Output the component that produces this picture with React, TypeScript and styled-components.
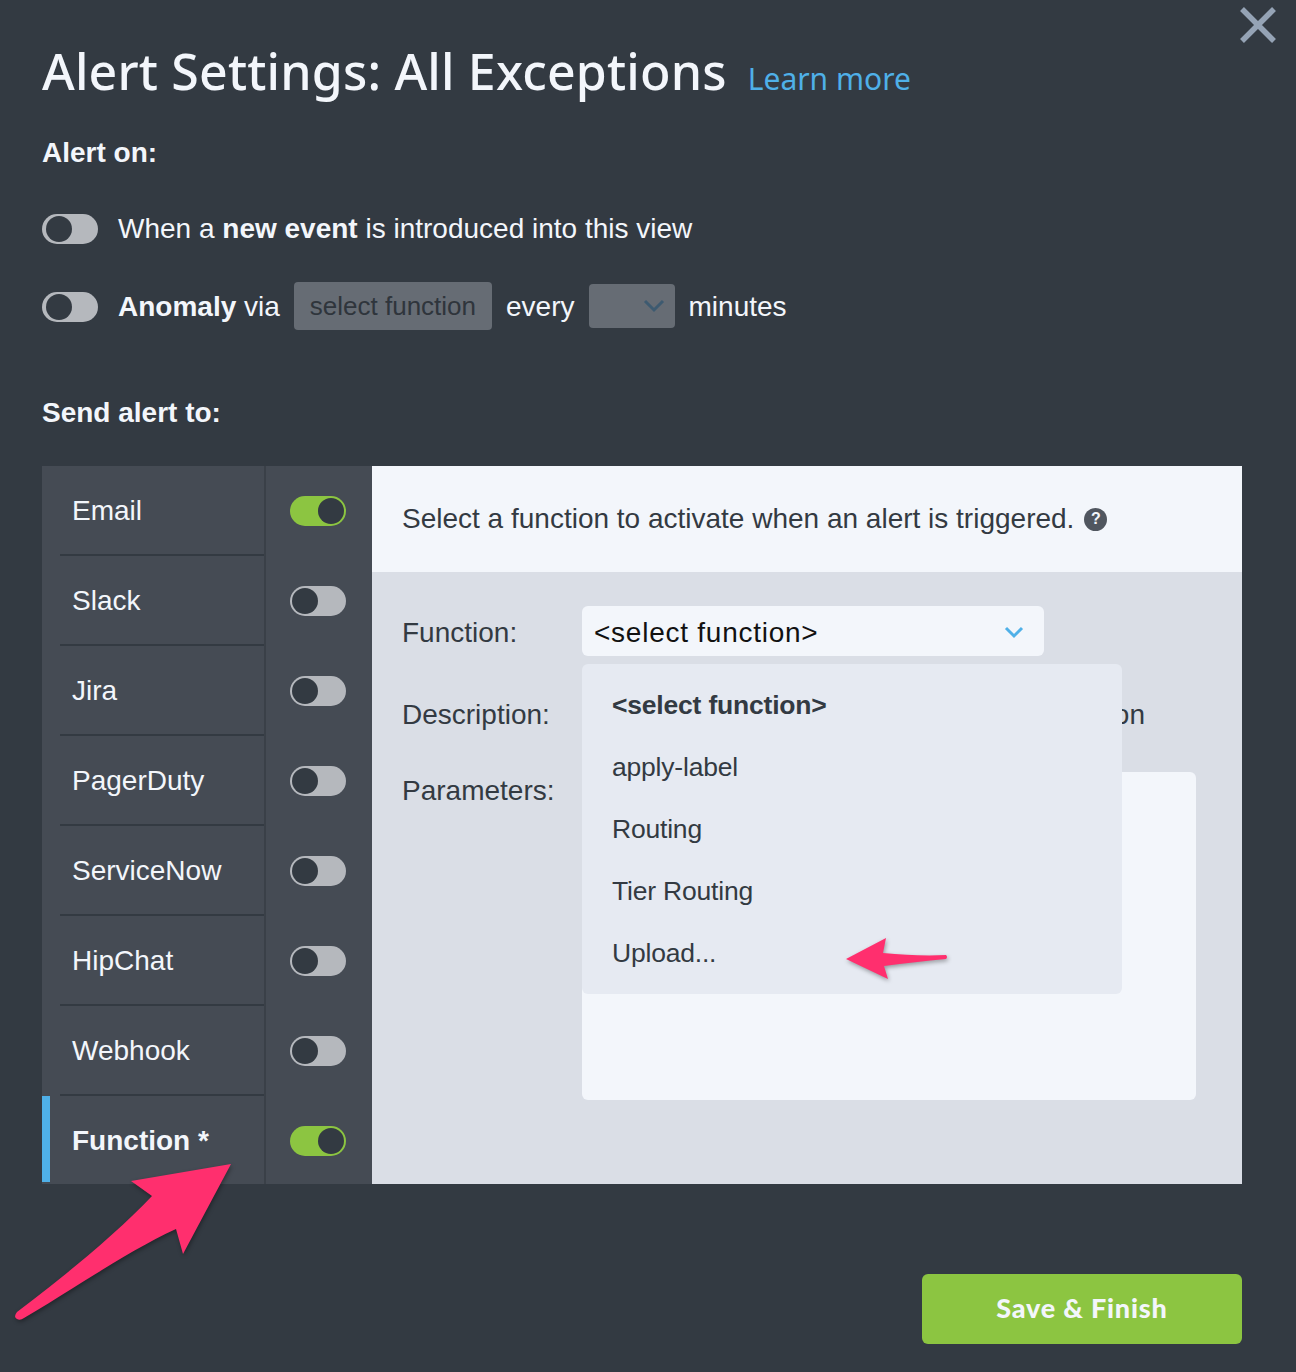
import React from "react";
import styled, { createGlobalStyle } from "styled-components";

const GlobalStyle = createGlobalStyle`
  html, body {
    margin: 0;
    padding: 0;
    background: #333a42;
  }
  * {
    box-sizing: border-box;
  }
`;

const Page = styled.div`
  position: relative;
  width: 1296px;
  height: 1372px;
  padding: 42px 54px 0 42px;
  overflow: hidden;
  background: #333a42;
  color: #f3f6fb;
  font-family: "Liberation Sans", Arial, sans-serif;
  font-size: 28px;
`;

const CloseIcon = styled.svg`
  position: absolute;
  top: 6px;
  right: 19px;
`;

const TitleRow = styled.div`
  display: flex;
  align-items: baseline;
  gap: 21px;
  height: 60px;
  line-height: 58px;
`;

const Title = styled.h1`
  margin: 0;
  font-family: "Noto Sans", sans-serif;
  font-size: 50px;
  font-weight: 500;
  letter-spacing: 0.18px;
  color: #f3f6fb;
`;

const LearnMore = styled.a`
  font-family: "Noto Sans", sans-serif;
  font-size: 30px;
  color: #4fb0e8;
`;

const SectionHeading = styled.div<{ $top: number }>`
  margin-top: ${(p) => p.$top}px;
  line-height: 32px;
  font-weight: 700;
`;

const OptionRow = styled.div<{ $top: number }>`
  display: flex;
  align-items: center;
  height: 48px;
  margin-top: ${(p) => p.$top}px;
`;

const Track = styled.span<{ $on?: boolean; $inset: number }>`
  display: flex;
  flex: none;
  align-items: center;
  justify-content: ${(p) => (p.$on ? "flex-end" : "flex-start")};
  width: 56px;
  height: 30px;
  padding: 0 2px 0 ${(p) => p.$inset}px;
  border-radius: 15px;
  background: ${(p) => (p.$on ? "#8cc541" : "#b5b8bd")};
`;

const Knob = styled.span`
  width: 26px;
  height: 26px;
  border-radius: 50%;
  background: #333a42;
`;

const Toggle = ({ on, inset = 2 }: { on?: boolean; inset?: number }) => (
  <Track $on={on} $inset={inset}>
    <Knob />
  </Track>
);

const OptionText = styled.span`
  margin-left: 20px;
`;

const FakeSelect = styled.span`
  display: flex;
  align-items: center;
  height: 48px;
  margin: 0 14px 2px;
  padding: 0 16px;
  border-radius: 4px;
  background: #666c74;
  color: #2f353c;
  font-size: 26px;
`;

const MinuteSelect = styled.span`
  display: flex;
  align-items: center;
  justify-content: flex-end;
  width: 86px;
  height: 44px;
  margin: 0 14px 2px;
  padding-right: 10px;
  border-radius: 4px;
  background: #666c74;
`;

const Table = styled.div`
  display: flex;
  width: 1200px;
  height: 718px;
  margin-top: 37px;
`;

const Sidebar = styled.div`
  display: flex;
  flex: none;
  flex-direction: column;
  width: 330px;
  background: #454b54;
`;

const Channel = styled.div`
  display: flex;
  flex: none;
  height: 90px;
  &:last-child {
    height: 88px;
  }
`;

const ChannelCell = styled.div<{ $active?: boolean }>`
  width: 224px;
  padding-left: 18px;
  border-right: 2px solid #3a4048;
  background: ${(p) =>
    p.$active
      ? "linear-gradient(#4fb0e8, #4fb0e8) left top / 8px 86px no-repeat"
      : "none"};
`;

const ChannelName = styled.div<{ $active?: boolean; $last?: boolean }>`
  height: 100%;
  padding: 28px 0 0 12px;
  border-bottom: 2px solid ${(p) => (p.$last ? "transparent" : "#333a42")};
  line-height: 34px;
  font-weight: ${(p) => (p.$active ? 700 : 400)};
`;

const ChannelSwitch = styled.div`
  display: flex;
  flex: 1;
  justify-content: center;
  padding-top: 30px;
  padding-right: 2px;
`;

const Panel = styled.div`
  position: relative;
  flex: 1;
  background: #dadee6;
  color: #333a42;
`;

const PanelHeader = styled.div`
  display: flex;
  align-items: center;
  gap: 10px;
  height: 106px;
  padding: 0 30px;
  background: #f3f6fb;
`;

const HelpBadge = styled.span`
  display: flex;
  align-items: center;
  justify-content: center;
  width: 23px;
  height: 23px;
  border-radius: 50%;
  background: #50565f;
  color: #f3f6fb;
  font-size: 16px;
  font-weight: 700;
`;

const Form = styled.div`
  display: grid;
  grid-template-columns: 180px 614px;
  grid-template-rows: 50px 32px 328px;
  row-gap: 42px;
  padding: 34px 0 0 30px;
`;

const FieldLabel = styled.div<{ $nudge: number }>`
  margin-top: ${(p) => p.$nudge}px;
  line-height: 32px;
`;

const FunctionSelect = styled.div`
  display: flex;
  align-items: center;
  justify-content: space-between;
  width: 462px;
  height: 50px;
  padding: 4px 19px 0 12px;
  border-radius: 6px;
  background: #f3f6fb;
  color: #111;
  letter-spacing: 0.75px;
`;

const Description = styled.div`
  width: 563px;
  margin-top: 1px;
  line-height: 32px;
  text-align: right;
`;

const Parameters = styled.div`
  border-radius: 6px;
  background: #f3f6fb;
`;

const Menu = styled.ul`
  position: absolute;
  top: 198px;
  left: 210px;
  width: 540px;
  margin: 0;
  padding: 10px 0;
  border-radius: 6px;
  background: #e6eaf2;
  list-style: none;
`;

const MenuItem = styled.li<{ $selected?: boolean }>`
  height: 62px;
  padding-left: 30px;
  line-height: 62px;
  font-size: 26.5px;
  letter-spacing: -0.2px;
  font-weight: ${(p) => (p.$selected ? 700 : 400)};
`;

const Footer = styled.div`
  display: flex;
  justify-content: flex-end;
  margin-top: 90px;
`;

const SaveButton = styled.button`
  width: 320px;
  height: 70px;
  padding: 0 0 4px;
  border: 0;
  border-radius: 6px;
  background: #8cc541;
  color: #f3f6fb;
  font-family: "Lato", sans-serif;
  font-size: 27px;
  font-weight: 900;
  letter-spacing: 0.8px;
`;

const Annotation = styled.svg`
  position: absolute;
  top: 0;
  left: 0;
  pointer-events: none;
  filter: drop-shadow(1px 2px 2px rgba(0, 0, 0, 0.35));
`;

const channels = ["Email", "Slack", "Jira", "PagerDuty", "ServiceNow", "HipChat", "Webhook", "Function *"];

const App = () => {
  return (
    <Page>
      <GlobalStyle />
      <CloseIcon width="38" height="38" viewBox="0 0 38 38">
        <path d="M3 3 L35 35 M35 3 L3 35" stroke="#95a3b5" strokeWidth="5.5" fill="none" />
      </CloseIcon>

      <TitleRow>
        <Title>Alert Settings: All Exceptions</Title>
        <LearnMore>Learn more</LearnMore>
      </TitleRow>

      <SectionHeading $top={35}>Alert on:</SectionHeading>
      <OptionRow $top={36}>
        <Toggle inset={4} />
        <OptionText>
          When a <b>new event</b> is introduced into this view
        </OptionText>
      </OptionRow>
      <OptionRow $top={30}>
        <Toggle inset={4} />
        <OptionText>
          <b>Anomaly</b> via
        </OptionText>
        <FakeSelect>select function</FakeSelect>
        every
        <MinuteSelect>
          <svg width="22" height="14" viewBox="0 0 22 14">
            <path d="M2 2 L11 11 L20 2" stroke="#3d5a70" strokeWidth="3" fill="none" />
          </svg>
        </MinuteSelect>
        minutes
      </OptionRow>

      <SectionHeading $top={66}>Send alert to:</SectionHeading>
      <Table>
        <Sidebar>
          {channels.map((name, i) => {
            const active = i === channels.length - 1;
            return (
              <Channel key={name}>
                <ChannelCell $active={active}>
                  <ChannelName $active={active} $last={active}>
                    {name}
                  </ChannelName>
                </ChannelCell>
                <ChannelSwitch>
                  <Toggle on={i === 0 || active} />
                </ChannelSwitch>
              </Channel>
            );
          })}
        </Sidebar>
        <Panel>
          <PanelHeader>
            Select a function to activate when an alert is triggered.
            <HelpBadge>?</HelpBadge>
          </PanelHeader>
          <Form>
            <FieldLabel $nudge={11}>Function:</FieldLabel>
            <FunctionSelect>
              &lt;select function&gt;
              <svg width="22" height="14" viewBox="0 0 22 14">
                <path d="M3 2 L11 10 L19 2" stroke="#4fb0e8" strokeWidth="3" fill="none" />
              </svg>
            </FunctionSelect>
            <FieldLabel $nudge={1}>Description:</FieldLabel>
            <Description>on</Description>
            <FieldLabel $nudge={3}>Parameters:</FieldLabel>
            <Parameters />
          </Form>
          <Menu>
            <MenuItem $selected>&lt;select function&gt;</MenuItem>
            <MenuItem>apply-label</MenuItem>
            <MenuItem>Routing</MenuItem>
            <MenuItem>Tier Routing</MenuItem>
            <MenuItem>Upload...</MenuItem>
          </Menu>
        </Panel>
      </Table>

      <Footer>
        <SaveButton>Save &amp; Finish</SaveButton>
      </Footer>

      <Annotation width="1296" height="1372" viewBox="0 0 1296 1372">
        <path
          d="M231 1164 L131 1181 L152 1196 C120 1230 70 1272 17 1312 Q13 1317 17 1319 Q20 1321 24 1318 C80 1285 130 1250 176 1229 L183 1254 Z"
          fill="#ff2f6e"
        />
        <path
          d="M846 959 L886 938 L883 953 C905 955 925 956 946 955 Q948 957 946 959 C925 961 905 963 884 966 L888 979 Z"
          fill="#ff2f6e"
        />
      </Annotation>
    </Page>
  );
};

export default App;
